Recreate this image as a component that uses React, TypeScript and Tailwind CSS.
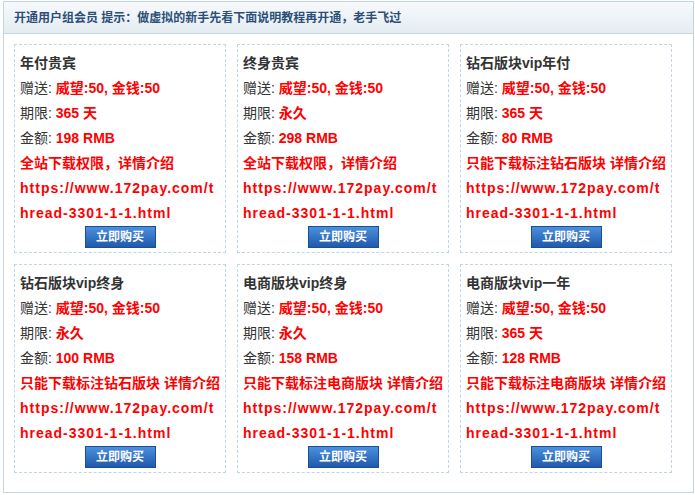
import React from 'react';

type Plan = {
  title: string;
  days: string;
  price: string;
  note: string;
};

const plans: Plan[] = [
  { title: '年付贵宾', days: '365 天', price: '198 RMB', note: '全站下载权限，详情介绍' },
  { title: '终身贵宾', days: '永久', price: '298 RMB', note: '全站下载权限，详情介绍' },
  { title: '钻石版块vip年付', days: '365 天', price: '80 RMB', note: '只能下载标注钻石版块 详情介绍' },
  { title: '钻石版块vip终身', days: '永久', price: '100 RMB', note: '只能下载标注钻石版块 详情介绍' },
  { title: '电商版块vip终身', days: '永久', price: '158 RMB', note: '只能下载标注电商版块 详情介绍' },
  { title: '电商版块vip一年', days: '365 天', price: '128 RMB', note: '只能下载标注电商版块 详情介绍' },
];

const url = 'https://www.172pay.com/thread-3301-1-1.html';

function PlanCard({ plan }: { plan: Plan }) {
  return (
    <div className="border border-dashed border-[#c2d5e3] px-[5px] pt-[6px] pb-[4px] text-[14px] leading-[25px] text-[#333]">
      <div className="font-bold">{plan.title}</div>
      <div>
        赠送: <span className="font-bold text-[#f00]">威望:50, 金钱:50</span>
      </div>
      <div>
        期限: <span className="font-bold text-[#f00]">{plan.days}</span>
      </div>
      <div>
        金额: <span className="font-bold text-[#f00]">{plan.price}</span>
      </div>
      <div className="font-bold text-[#f00]">{plan.note}</div>
      <div className="font-bold text-[#f00] break-all tracking-[1px]">{url}</div>
      <div className="flex justify-center">
        <button className="w-[71px] h-[22px] border border-[#1b4f94] bg-gradient-to-b from-[#4b90dd] to-[#2159ad] text-[12px] font-bold leading-[20px] text-white">
          立即购买
        </button>
      </div>
    </div>
  );
}

export default function App() {
  return (
    <div
      className="bg-white w-[695px] h-[495px] pt-px"
      style={{ fontFamily: '"Liberation Sans", "Noto Sans CJK SC", sans-serif' }}
    >
      <div className="ml-[3px] w-[691px] border border-[#c2d5e3]">
        <div className="h-[32px] border-b border-[#c2d5e3] bg-gradient-to-b from-[#f6f9fb] to-[#e5edf2] pl-[10px] text-[12px] font-bold leading-[32px] text-[#2c4e78]">
          开通用户组会员 提示：做虚拟的新手先看下面说明教程再开通，老手飞过
        </div>
        <div className="grid grid-cols-[212px_212px_212px] gap-x-[11px] gap-y-[11px] pl-[10px] pt-[10px] pb-[19px]">
          {plans.map((p, i) => (
            <PlanCard key={i} plan={p} />
          ))}
        </div>
      </div>
    </div>
  );
}
